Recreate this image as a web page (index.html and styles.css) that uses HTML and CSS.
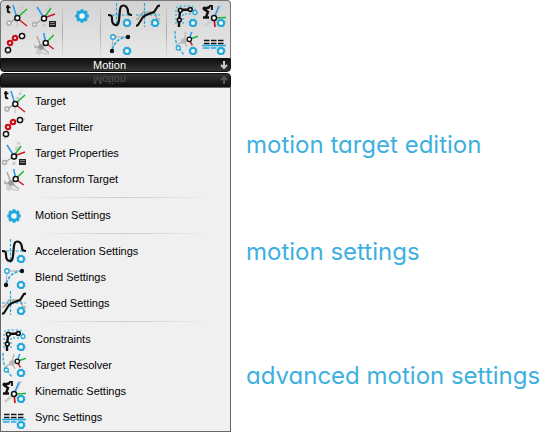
FILE: index.html
```
<!DOCTYPE html>
<html lang="en">
<head>
<meta charset="utf-8">
<title>Motion</title>
<link rel="stylesheet" href="styles.css">
</head>
<body>
<svg class="sprite" aria-hidden="true">
  <defs>
    <g id="cog"><circle cx="19" cy="20" r="3" fill="#f4fbfe" stroke="#22a7dc" stroke-width="2"/><circle cx="19" cy="20" r="4" fill="none" stroke="#22a7dc" stroke-dasharray="1.6 1.54"/></g>
    <symbol id="target" viewBox="0 0 24 24">
      <g fill="none" stroke-width="1.5"><path d="M13 15 20 1" stroke="#ccc" stroke-width="3" stroke-dasharray="3 2"/><path d="M13 15v9" stroke="#ccc"/><path d="M13 15 5 20" stroke="#aaa"/><path d="M13 15 9 2" stroke="#2598f0"/><path d="M13 15 23 6" stroke="#18b837"/><path d="M13 15 23 23" stroke="#cf1720"/></g>
      <path d="M3.8 2v6.4q0 1.2 2.4.8M2 4.4h4.4" fill="none" stroke="#111" stroke-width="1.9"/>
      <circle cx="5" cy="20" r="2" fill="#eee" stroke="#aaa" stroke-width="1.4"/><circle cx="13.3" cy="15" r="2.5" fill="#fff" stroke="#111" stroke-width="1.5"/>
    </symbol>
    <symbol id="filter" viewBox="0 0 24 24">
      <path d="M3 24 4 19 6 12 11 7 18 5 23 4" fill="none" stroke="#ccc" stroke-width="1.5"/>
      <circle cx="4" cy="19" r="2.6" fill="#fff" stroke="#111" stroke-width="1.5"/><circle cx="18" cy="5" r="2.6" fill="#fff" stroke="#111" stroke-width="1.5"/><g fill="#fff" stroke="#cb101b" stroke-width="2.2"><circle cx="6" cy="12" r="2.2"/><circle cx="11" cy="7" r="2.2"/></g>
    </symbol>
    <symbol id="properties" viewBox="0 0 24 24">
      <g fill="none" stroke-width="1.5"><path d="m12 15 5-14M12 15v9" stroke="#ccc" stroke-width="3" stroke-dasharray="4 2"/><path d="M12 15 2 22" stroke="#aaa"/><path d="M12 15 5 4" stroke="#2598f0"/><path d="m12 15 7-10" stroke="#18b837"/><path d="m12 15 11-4" stroke="#cf1720"/></g>
      <circle cx="2.5" cy="21.5" r="2" fill="#eee" stroke="#aaa" stroke-width="1.4"/><circle cx="12" cy="15.5" r="2.5" fill="#fff" stroke="#111" stroke-width="1.5"/>
      <path d="M17 18h7v6h-7z" fill="#222"/><path d="M18 19.5h5M18 21.500h5" stroke="#999" stroke-width=".8"/>
    </symbol>
    <symbol id="transform" viewBox="0 0 24 24">
      <g fill="none" stroke-width="1.5"><path d="m7 21-5-8m5 8 10 3M7 21l6-4" stroke="#ccc"/><path d="M9 16 5 5m4 11 8 6M9 16H2" stroke="#aaa"/><path d="m9 16 5-4" stroke="#999"/><path d="M13.7 12 11.7 2" stroke="#2598f0"/><path d="m13.7 12 8-8" stroke="#18b837"/><path d="m13.7 12 8 6" stroke="#cf1720"/></g>
      <circle cx="7" cy="21" r="2.7" fill="#ccc"/><circle cx="9" cy="16" r="2.8" fill="#999"/><circle cx="13.7" cy="12" r="2.5" fill="#fff" stroke="#111" stroke-width="1.5"/>
    </symbol>
    <symbol id="gear" viewBox="0 0 24 24">
      <circle cx="12" cy="13" r="4.3" fill="#f4fbfe" stroke="#22a7dc" stroke-width="3"/><path d="M12 6.2v2M12 17.8v2M5.2 13h2M16.8 13h2M7.2 8.2l1.4 1.4M15.4 16.4l1.4 1.4M7.2 17.8l1.4-1.4M15.4 9.6l1.4-1.4" stroke="#22a7dc" stroke-width="3"/>
    </symbol>
    <symbol id="acceleration" viewBox="0 0 24 24">
      <path d="M8.5 0v24M0 12h24" stroke="#22a7dc" stroke-width="1.2" stroke-dasharray="3 1.5"/>
      <path d="M0 12c4 0 4 1 4 4 0 3 1 6 4 6s3-5 3.500-10C12 6 12 2.500 15.500 2.500S20 7 20 9s1 3 4 3" fill="none" stroke="#111" stroke-width="2.2"/>
      <use href="#cog"/>
    </symbol>
    <symbol id="blend" viewBox="0 0 24 24">
      <path d="M20 6H5L4 20" fill="none" stroke="#aaa"/><path d="M20 6Q7 7 4 20" fill="none" stroke="#22a7dc" stroke-width="1.7" stroke-dasharray="3 1.5"/>
      <circle cx="5" cy="6" r="2.3" fill="#fff" stroke="#22a7dc" stroke-width="1.4"/><circle cx="20" cy="6" r="2.2" fill="#111"/><circle cx="4" cy="20" r="2.2" fill="#111"/>
      <use href="#cog"/>
    </symbol>
    <symbol id="speed" viewBox="0 0 24 24">
      <path d="m0 16h2l5-7h11l3 7h3" fill="none" stroke="#aaa" stroke-width="1.5"/><path d="M8.5 0v24M0 12h24" stroke="#22a7dc" stroke-width="1.2" stroke-dasharray="3 1.5"/>
      <path d="m0 23 2-1 5-8 3-2 8-3 4-6 2-.5" fill="none" stroke="#111" stroke-width="2.2"/>
      <use href="#cog"/>
    </symbol>
    <symbol id="constraints" viewBox="0 0 24 24">
      <path d="M2 21V7q0-4 4-4h10q4 0 5 4M9 21V11h9" fill="none" stroke="#4bb8e4" stroke-width="1.5" stroke-dasharray="2 2"/>
      <path d="M5 24v-7l1.300-10 10-.5" fill="none" stroke="#111" stroke-width="2.4"/>
      <g fill="#fff" stroke="#111" stroke-width="1.6"><circle cx="6.3" cy="7.3" r="1.9"/><circle cx="16.3" cy="6.5" r="1.9"/><circle cx="5.3" cy="17" r="1.9"/></g><circle cx="21" cy="9.5" r="2" fill="#fff" stroke="#22a7dc" stroke-width="1.3"/>
      <use href="#cog"/>
    </symbol>
    <symbol id="resolver" viewBox="0 0 24 24">
      <path d="M1 0q0 13 4 17l5 7" fill="none" stroke="#22a7dc" stroke-width="1.3" stroke-dasharray="3 1.5"/>
      <path d="m10 10 2-9M10 10l-7 4m7-4 3 6" fill="none" stroke="#bbb" stroke-width="1.5"/><circle cx="10" cy="10" r="2.8" fill="#b8b8b8"/>
      <path d="M15.3 8.3 17.7 1" stroke="#2598f0" stroke-width="1.5"/><path d="m15.3 8.3 8.7-3" stroke="#18b837" stroke-width="1.5"/><path d="m15.3 8.3 3 6" stroke="#cf1720" stroke-width="1.5"/>
      <circle cx="15.3" cy="8.3" r="2.2" fill="#fff" stroke="#111" stroke-width="1.3"/><circle cx="4.3" cy="17" r="2" fill="#fff" stroke="#22a7dc" stroke-width="1.3"/>
      <use href="#cog"/>
    </symbol>
    <symbol id="kinematic" viewBox="0 0 24 24">
      <path d="m12 15 7-13M12 15l-9 8" stroke="#ccc" stroke-width="2.5"/>
      <path d="m2 6 6-2M2 6l4 3-2 5M1 14.500h6" fill="none" stroke="#111" stroke-width="2.4"/><path d="M7 3h3.500M10 2v5" fill="none" stroke="#111" stroke-width="1.8"/><circle cx="2.500" cy="5.500" r="2" fill="#111"/>
      <path d="m12 15 5-12" stroke="#2598f0" stroke-width="1.5"/><path d="m12 15 12-.5" stroke="#18b837" stroke-width="1.5"/><path d="m12 15 1 9" stroke="#cf1720" stroke-width="1.8"/>
      <circle cx="12" cy="15" r="2.5" fill="#fff" stroke="#111" stroke-width="1.5"/>
      <use href="#cog"/>
    </symbol>
    <symbol id="sync" viewBox="0 0 24 24">
      <path d="M2 9.500h5.500M9 9.500h5.500M16 9.500h5.500M2 12.500h5.500M9 12.500h5.500M16 12.500h5.500" stroke="#111" stroke-width="1.6"/><path d="M0 14.500h24" stroke="#22a7dc" stroke-width="1.6"/><path d="M1 17h6.500M9 17h5.500" stroke="#22a7dc" stroke-width="1.6"/>
      <use href="#cog"/>
    </symbol>
    <symbol id="arrow" viewBox="0 0 8 8"><path d="M4 0v7M1 4l3 3 3-3" fill="none" stroke="currentColor" stroke-width="2"/></symbol>
  </defs>
</svg>
<main class="page">
  <section class="panel" aria-label="Motion">
    <div class="toolbar">
      <div class="tools">
        <button class="tool" aria-label="Target"><svg class="icon"><use href="#target"/></svg></button>
        <button class="tool" aria-label="Target Properties"><svg class="icon"><use href="#properties"/></svg></button>
        <button class="tool" aria-label="Target Filter"><svg class="icon"><use href="#filter"/></svg></button>
        <button class="tool" aria-label="Transform Target"><svg class="icon"><use href="#transform"/></svg></button>
      </div>
      <div class="tools single">
        <button class="tool" aria-label="Motion Settings"><svg class="icon"><use href="#gear"/></svg></button>
      </div>
      <div class="tools">
        <button class="tool" aria-label="Acceleration Settings"><svg class="icon"><use href="#acceleration"/></svg></button>
        <button class="tool" aria-label="Speed Settings"><svg class="icon"><use href="#speed"/></svg></button>
        <button class="tool" aria-label="Blend Settings"><svg class="icon"><use href="#blend"/></svg></button>
      </div>
      <div class="tools">
        <button class="tool" aria-label="Constraints"><svg class="icon"><use href="#constraints"/></svg></button>
        <button class="tool" aria-label="Kinematic Settings"><svg class="icon"><use href="#kinematic"/></svg></button>
        <button class="tool" aria-label="Target Resolver"><svg class="icon"><use href="#resolver"/></svg></button>
        <button class="tool" aria-label="Sync Settings"><svg class="icon"><use href="#sync"/></svg></button>
      </div>
    </div>
    <button class="bar"><span>Motion</span><svg class="arrow"><use href="#arrow"/></svg></button>
    <div class="bar mirrored" aria-hidden="true"><span>Motion</span><svg class="arrow"><use href="#arrow"/></svg></div>
    <div class="menu">
      <div class="group">
        <button class="item"><svg class="icon"><use href="#target"/></svg>Target</button>
        <button class="item"><svg class="icon"><use href="#filter"/></svg>Target Filter</button>
        <button class="item"><svg class="icon"><use href="#properties"/></svg>Target Properties</button>
        <button class="item"><svg class="icon"><use href="#transform"/></svg>Transform Target</button>
      </div>
      <div class="group">
        <button class="item"><svg class="icon"><use href="#gear"/></svg>Motion Settings</button>
      </div>
      <div class="group">
        <button class="item"><svg class="icon"><use href="#acceleration"/></svg>Acceleration Settings</button>
        <button class="item"><svg class="icon"><use href="#blend"/></svg>Blend Settings</button>
        <button class="item"><svg class="icon"><use href="#speed"/></svg>Speed Settings</button>
      </div>
      <div class="group">
        <button class="item"><svg class="icon"><use href="#constraints"/></svg>Constraints</button>
        <button class="item"><svg class="icon"><use href="#resolver"/></svg>Target Resolver</button>
        <button class="item"><svg class="icon"><use href="#kinematic"/></svg>Kinematic Settings</button>
        <button class="item"><svg class="icon"><use href="#sync"/></svg>Sync Settings</button>
      </div>
    </div>
  </section>
  <aside class="captions">
    <h2 class="caption">motion target edition</h2>
    <h2 class="caption">motion settings</h2>
    <h2 class="caption">advanced motion settings</h2>
  </aside>
</main>
</body>
</html>
```
FILE: styles.css
```
* { box-sizing: border-box; }
body { margin: 0; background: #fff; font: 11px/14px "Liberation Sans", sans-serif; color: #000; }
button { border: 0; padding: 0; background: none; font: inherit; color: inherit; }
.sprite { position: absolute; width: 0; height: 0; }
.page { display: grid; grid-template-columns: max-content 1fr; column-gap: 15px; align-items: start; }
.icon { display: block; flex: none; width: 24px; height: 24px; }

.toolbar {
  display: flex;
  padding: 2px 4px 0 3px;
  border: 1px solid #777;
  border-bottom: 0;
  border-radius: 4px 4px 0 0;
  background: linear-gradient(#d3d3d3, #e8e8e8);
}
.tools { display: grid; grid-template-columns: 24px 24px; gap: 4px; align-content: start; height: 55px; }
.tools.single { grid-template-columns: 24px; }
.tools + .tools {
  margin-left: 6px;
  padding-left: 7px;
  border-left: 1px solid;
  border-image: linear-gradient(transparent, #aaa, transparent) 1;
}

.bar {
  display: flex;
  align-items: center;
  justify-content: center;
  position: relative;
  width: 100%;
  height: 14px;
  border: 1px solid #111;
  border-radius: 0 0 4px 4px;
  background: linear-gradient(#111, #333);
  color: #fff;
}
.bar span { margin-right: 12px; }
.arrow { position: absolute; right: 2px; bottom: 2px; width: 8px; height: 8px; color: #ccc; }
.mirrored { margin-top: 1px; transform: scaleY(-1); color: #555; }
.mirrored .arrow { color: #555; }

.menu { padding: 0 1px 1px; border: 1px solid #666; background: #f0f0f0; }
.group + .group::before {
  content: "";
  display: block;
  height: 1px;
  margin: 5px 14px 4px 30px;
  background: linear-gradient(90deg, transparent, #ccc 50%, transparent);
}
.item { display: flex; align-items: center; gap: 9px; width: 100%; height: 26px; text-align: left; }

.captions { padding-top: 130px; }
.caption {
  margin: 0 0 77px;
  font: 400 24px/30px Inter, sans-serif;
  font-feature-settings: "cv11";
  color: #3eb0e0;
  white-space: nowrap;
}
.caption:nth-child(2) { margin-bottom: 94px; }
.caption:last-child { margin-bottom: 0; }
```
